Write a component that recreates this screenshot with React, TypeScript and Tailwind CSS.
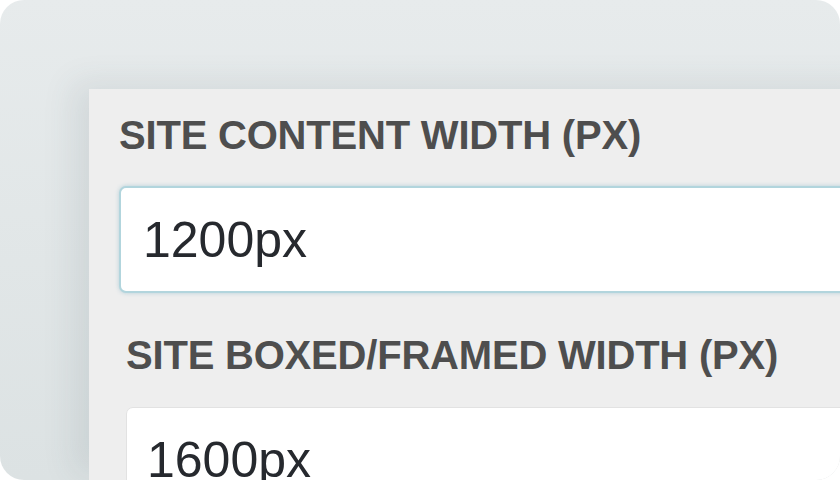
import React from 'react';

const fields = [
  { label: 'SITE CONTENT WIDTH (PX)', value: '1200px', focused: true },
  { label: 'SITE BOXED/FRAMED WIDTH (PX)', value: '1600px', focused: false },
];

export default function App() {
  return (
    <div className="w-[840px] h-[480px] bg-white">
      <div className="w-full h-full rounded-[24px] overflow-hidden bg-gradient-to-b from-[#e7ebec] to-[#dce2e3] flex pl-[89px] pt-[89px]">
        <div className="flex-1 bg-[#eeeeee] shadow-[-16px_-6px_30px_rgba(60,80,90,0.1)] pl-[30px] pt-[26px] font-['Liberation_Sans',Arial,sans-serif]">
          {fields.map((f, i) => (
            <div key={f.label} className={i === 0 ? '' : 'ml-[7px] mt-[42px]'}>
              <div className="text-[40px] leading-[40px] font-bold tracking-[-0.2px] text-[#4e4e4e] whitespace-nowrap">
                {f.label}
              </div>
              <div
                className={
                  f.focused
                    ? 'mt-[31px] h-[107px] w-[760px] rounded-[7px] bg-white border-2 border-[#b2d5dd] shadow-[0_0_4px_rgba(110,170,190,0.45)] flex items-center pl-[22px]'
                    : 'mt-[32px] h-[107px] w-[760px] rounded-[7px] bg-white border border-[#e2e2e2] flex items-center pl-[20px] pb-[2px]'
                }
              >
                <span className="text-[50px] leading-none text-[#26292e] whitespace-nowrap">{f.value}</span>
              </div>
            </div>
          ))}
        </div>
      </div>
    </div>
  );
}
